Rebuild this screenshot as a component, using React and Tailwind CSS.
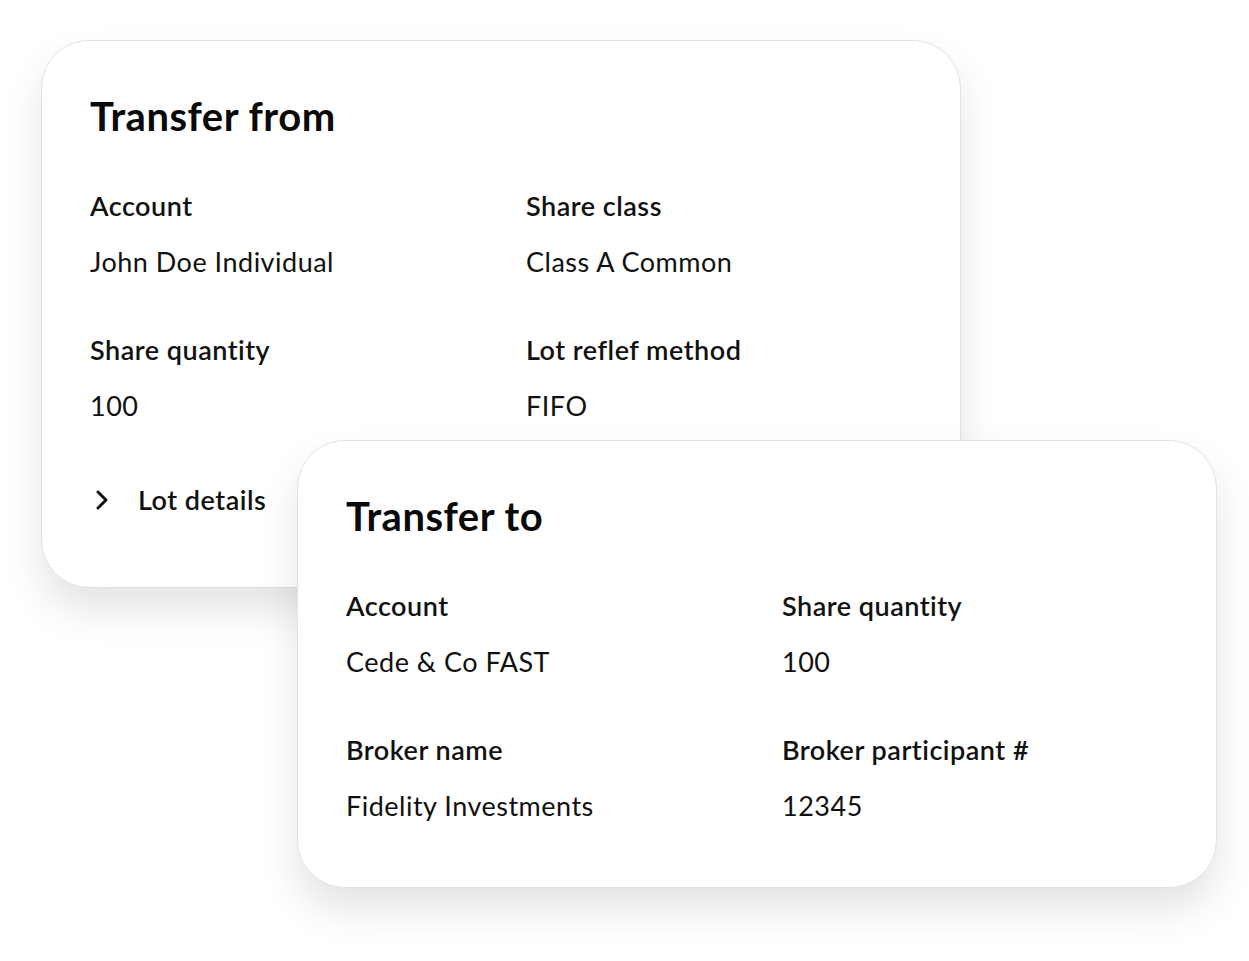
import { ChevronRight } from 'lucide-react';

function Field({ label, value }) {
  return (
    <div>
      <p className="text-[27px] leading-[32px] font-semibold tracking-[0.5px] text-[#111]">{label}</p>
      <p className="mt-[24px] text-[27px] leading-[32px] font-normal tracking-[0.5px] text-[#111]">{value}</p>
    </div>
  );
}

function Card({ title, fields, className = '', children }) {
  return (
    <div
      className={`w-[920px] rounded-[48px] border border-[#e2e2de] bg-white pl-[48px] pt-[53px] shadow-[0_22px_40px_rgba(0,0,0,0.11)] ${className}`}
    >
      <h2 className="text-[40px] leading-[44px] font-bold tracking-[0.5px] text-[#0a0a0a]">{title}</h2>
      <div className="mt-[52px] grid grid-cols-[436px_1fr] gap-y-[56px]">
        {fields.map((f) => (
          <Field key={f.label} label={f.label} value={f.value} />
        ))}
      </div>
      {children}
    </div>
  );
}

export default function App() {
  return (
    <div className="min-h-[961px] w-full bg-white pt-[40px] font-['Lato',sans-serif]">
      <Card
        className="ml-[41px] h-[548px]"
        title="Transfer from"
        fields={[
          { label: 'Account', value: 'John Doe Individual' },
          { label: 'Share class', value: 'Class A Common' },
          { label: 'Share quantity', value: '100' },
          { label: 'Lot reflef method', value: 'FIFO' },
        ]}
      >
        {/* Collapsible lot details */}
        <div className="mt-[62px] flex items-center gap-[20px] text-[#111]">
          <ChevronRight size={32} strokeWidth={2.2} className="ml-[-4px]" />
          <span className="text-[27px] leading-[32px] font-semibold tracking-[0.5px]">Lot details</span>
        </div>
      </Card>

      <Card
        className="relative z-10 ml-[297px] mt-[-148px] h-[448px]"
        title="Transfer to"
        fields={[
          { label: 'Account', value: 'Cede & Co FAST' },
          { label: 'Share quantity', value: '100' },
          { label: 'Broker name', value: 'Fidelity Investments' },
          { label: 'Broker participant #', value: '12345' },
        ]}
      />
    </div>
  );
}
